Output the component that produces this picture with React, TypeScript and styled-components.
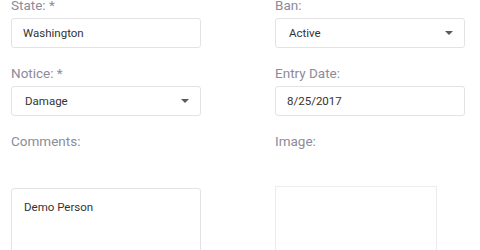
import React from 'react';
import styled, { createGlobalStyle } from 'styled-components';

const GlobalStyle = createGlobalStyle`
  html, body {
    margin: 0;
    padding: 0;
    background: #ffffff;
    overflow: hidden;
  }
  body {
    font-family: Roboto, "Liberation Sans", Arial, sans-serif;
  }
`;

const FormWrapper = styled.div`
  display: grid;
  grid-template-columns: 190px 190px;
  column-gap: 74px;
  row-gap: 17px;
  padding-left: 11px;
  margin-top: -3px;
  width: 480px;
  height: 253px;
  box-sizing: border-box;
  overflow: hidden;
`;

const Field = styled.div`
  display: flex;
  flex-direction: column;
  gap: 5px;
`;

const Label = styled.label<{ $spaced?: boolean }>`
  font-size: 13.5px;
  line-height: 16px;
  color: #8c8b9c;
  margin-bottom: ${(p) => (p.$spaced ? '32px' : '0')};
`;

const InputBox = styled.div`
  display: flex;
  align-items: center;
  justify-content: space-between;
  height: 30px;
  box-sizing: border-box;
  border: 1px solid #e3e3e6;
  border-radius: 3px;
  padding: 0 10px 0 11px;
  font-size: 11.5px;
  color: #333333;
  background: #ffffff;
`;

const SelectBox = styled(InputBox)`
  padding-left: 13px;
`;

const Caret = styled.span`
  width: 0;
  height: 0;
  border-left: 4px solid transparent;
  border-right: 4px solid transparent;
  border-top: 4px solid #5a5a5a;
  margin-right: 1px;
`;

const TextArea = styled.div`
  height: 80px;
  margin-top: 2px;
  box-sizing: border-box;
  border: 1px solid #e3e3e6;
  border-radius: 3px;
  padding: 11px 12px;
  font-size: 11.5px;
  color: #333333;
`;

const ImageBox = styled.div<{ $width: number }>`
  width: ${(p) => p.$width}px;
  height: 80px;
  box-sizing: border-box;
  border: 1px solid #ececee;
`;

const App = () => {
  return (
    <>
      <GlobalStyle />
      <FormWrapper>
        <Field>
          <Label>State: *</Label>
          <InputBox>Washington</InputBox>
        </Field>
        <Field>
          <Label>Ban:</Label>
          <SelectBox>
            Active
            <Caret />
          </SelectBox>
        </Field>
        <Field>
          <Label>Notice: *</Label>
          <SelectBox>
            Damage
            <Caret />
          </SelectBox>
        </Field>
        <Field>
          <Label>Entry Date:</Label>
          <InputBox>8/25/2017</InputBox>
        </Field>
        <Field>
          <Label $spaced>Comments:</Label>
          <TextArea>Demo Person</TextArea>
        </Field>
        <Field>
          <Label $spaced>Image:</Label>
          <ImageBox $width={162} />
        </Field>
      </FormWrapper>
    </>
  );
};

export default App;
